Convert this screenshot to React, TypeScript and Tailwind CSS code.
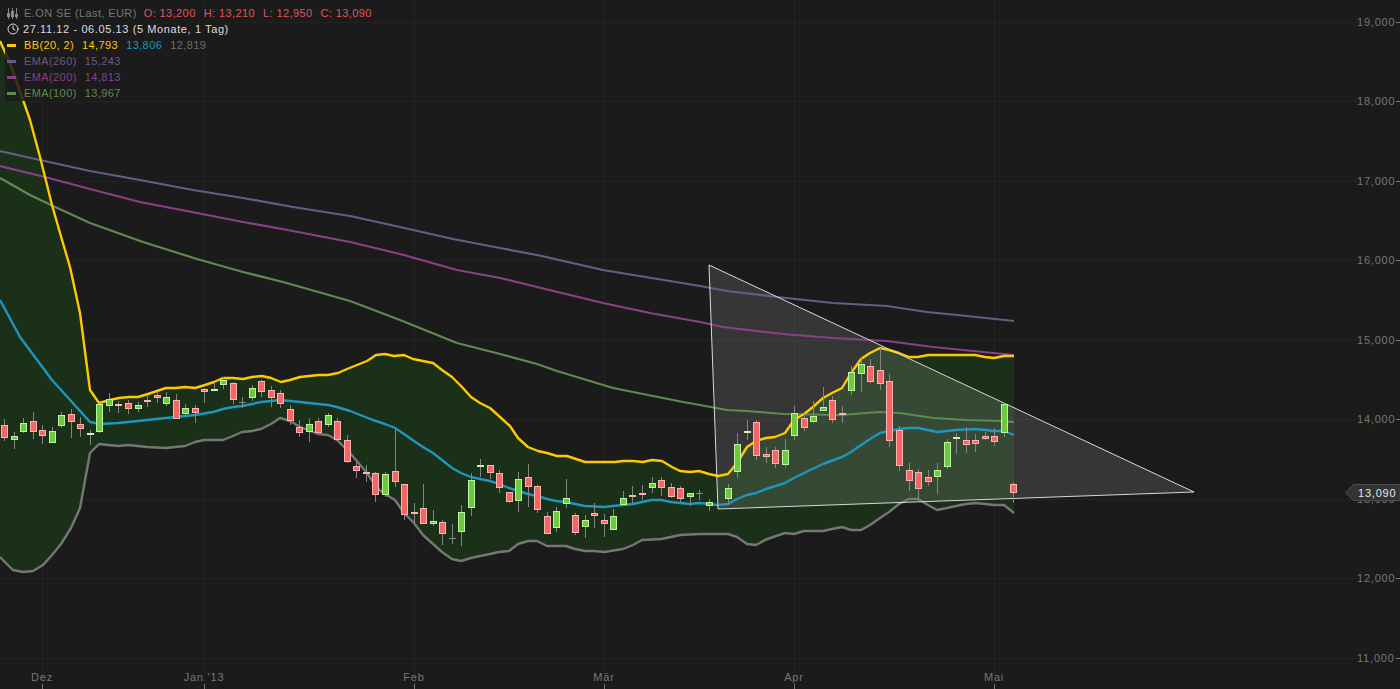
import React from 'react';
import { Clock } from 'lucide-react';

type Pt = [number, number];
type Candle = [number, number, number, number, number, 'r' | 'g' | 'n'];

const upper: Pt[] = [[0,41],[10,63],[22,97],[30,120],[40,157],[52,205],[60,233],[70,267],[80,313],[90,390],[99,403],[110,400],[119,398],[129,397],[138,397],[148,394],[157,391],[166,388],[176,388],[185,387],[195,388],[205,385],[214,382],[223,378],[233,378],[243,379],[252,377],[262,376],[271,378],[281,382],[290,380],[300,377],[309,376],[319,375],[328,375],[338,373],[347,369],[357,365],[367,361],[376,355],[385,354],[394,356],[404,355],[413,359],[423,361],[433,363],[442,370],[452,377],[462,387],[471,397],[480,403],[490,408],[500,417],[510,426],[518,438],[528,447],[538,451],[547,453],[557,456],[567,456],[576,459],[585,462],[595,462],[604,462],[615,462],[623,461],[633,461],[643,462],[652,460],[662,461],[672,467],[680,471],[690,472],[699,471],[709,474],[718,476],[728,474],[737,463],[747,447],[756,441],[766,438],[775,437],[785,433],[794,420],[804,414],[813,407],[823,398],[832,393],[842,388],[851,373],[861,359],[870,353],[880,348],[889,350],[899,353],[909,357],[918,357],[928,355],[937,355],[957,355],[975,355],[985,357],[994,358],[1004,356],[1014,356]];
const middle: Pt[] = [[0,300],[20,337],[52,380],[90,422],[100,424],[118,423],[128,422],[147,420],[166,418],[185,416],[195,415],[213,412],[223,409],[233,407],[242,406],[252,404],[261,402],[271,401],[280,400],[290,401],[300,402],[309,403],[318,404],[328,405],[337,407],[350,411],[373,420],[385,424],[395,428],[404,434],[414,441],[423,447],[433,453],[442,460],[452,468],[461,473],[471,477],[480,479],[490,481],[499,484],[509,488],[518,491],[528,494],[537,496],[547,499],[556,501],[566,502],[575,504],[585,506],[604,507],[613,506],[623,505],[633,504],[642,502],[652,500],[661,500],[671,502],[680,503],[690,504],[699,503],[709,504],[718,505],[728,504],[737,499],[747,495],[756,493],[766,489],[785,483],[794,478],[804,473],[823,464],[842,457],[851,452],[861,445],[870,439],[880,433],[889,431],[899,429],[909,428],[918,428],[928,430],[937,432],[956,430],[975,429],[985,430],[994,431],[1004,431],[1014,435]];
const lower: Pt[] = [[0,557],[13,570],[23,572],[33,571],[43,565],[52,555],[61,544],[71,528],[80,508],[90,453],[99,444],[118,446],[128,445],[147,447],[166,448],[185,446],[195,442],[204,440],[223,440],[233,436],[242,432],[252,431],[261,429],[271,424],[280,418],[290,421],[300,427],[318,434],[328,435],[337,440],[350,453],[367,473],[377,488],[385,494],[395,500],[404,513],[414,523],[423,535],[433,544],[442,552],[452,559],[461,561],[471,558],[480,556],[490,554],[499,552],[509,551],[518,544],[528,541],[537,541],[547,546],[566,546],[575,549],[585,551],[594,551],[604,552],[623,549],[633,545],[642,540],[661,539],[671,537],[680,535],[700,534],[728,534],[737,537],[747,544],[756,545],[765,540],[776,536],[785,533],[794,534],[804,531],[823,531],[832,529],[842,527],[851,530],[861,530],[870,525],[880,518],[889,512],[899,504],[909,499],[918,499],[928,505],[937,510],[947,508],[956,506],[966,504],[975,503],[985,504],[994,505],[1004,505],[1014,513]];
const ema260: Pt[] = [[0,151],[40,160],[90,171],[140,180],[193,190],[243,198],[293,207],[350,216],[400,227],[453,239],[500,248],[537,255],[603,270],[700,286],[727,291],[777,297],[833,303],[887,306],[927,312],[967,316],[1014,321]];
const ema200: Pt[] = [[0,166],[45,177],[90,189],[140,202],[197,213],[243,222],[293,231],[350,242],[400,254],[457,270],[500,278],[537,287],[603,303],[650,313],[700,322],[723,327],[783,334],[833,338],[887,341],[933,347],[983,352],[1014,355]];
const ema100: Pt[] = [[0,178],[30,195],[53,206],[90,223],[143,242],[197,259],[243,272],[283,282],[350,301],[400,320],[457,343],[500,354],[537,364],[557,371],[613,388],[683,402],[700,405],[727,410],[747,411],[783,414],[840,415],[880,412],[900,413],[933,418],[967,420],[1000,421],[1014,422]];

const candles: Candle[] = [
  [4,425,438,419,441,'r'],[14,436,440,432,449,'g'],[23,423,432,418,433,'g'],[33,421,432,412,439,'r'],[42,430,436,425,444,'r'],[52,431,443,427,443,'g'],[61,415,426,412,428,'g'],[71,414,422,409,438,'r'],[80,424,429,417,437,'r'],[90,433,435,430,445,'g'],
  [99,404,432,403,433,'g'],[109,399,406,393,412,'g'],[118,404,406,401,413,'r'],[128,403,409,400,414,'r'],[138,405,409,402,412,'g'],[147,400,401,395,407,'r'],[157,395,398,392,403,'r'],[166,397,404,392,406,'g'],[176,400,419,394,419,'r'],[185,408,414,404,416,'g'],
  [195,408,413,405,423,'r'],[204,389,392,388,403,'r'],[214,389,391,383,391,'g'],[223,380,385,377,389,'g'],[233,383,400,382,404,'r'],[242,402,403,397,408,'n'],[252,388,398,385,401,'g'],[261,381,392,380,397,'r'],[271,390,398,386,407,'r'],[280,393,404,390,408,'r'],
  [290,409,421,405,425,'r'],[299,427,433,420,437,'r'],[309,424,432,418,442,'g'],[318,421,433,418,433,'r'],[328,415,425,413,427,'g'],[337,421,440,418,442,'r'],[347,440,462,435,463,'r'],[356,466,471,462,478,'r'],[366,472,474,465,482,'r'],[375,473,495,472,502,'r'],
  [385,474,495,472,497,'g'],[395,471,482,430,487,'r'],[404,484,515,484,520,'r'],[414,512,513,503,523,'r'],[423,508,524,484,524,'r'],[433,521,524,510,526,'g'],[442,522,534,520,545,'r'],[452,538,539,524,544,'n'],[461,512,532,505,546,'g'],[471,480,508,473,516,'g'],
  [480,465,466,459,477,'g'],[490,465,473,465,479,'r'],[499,473,488,470,493,'r'],[509,492,502,492,503,'r'],[518,479,501,472,512,'g'],[528,477,487,464,507,'r'],[537,486,510,485,513,'r'],[547,516,534,512,534,'r'],[556,511,528,507,532,'g'],[566,498,504,479,508,'g'],
  [575,515,533,513,535,'r'],[585,520,527,515,538,'g'],[594,513,516,503,528,'r'],[604,520,524,514,537,'r'],[613,516,530,509,530,'g'],[623,498,505,491,505,'g'],[632,495,497,486,503,'r'],[642,493,494,485,500,'r'],[652,483,488,477,493,'g'],[661,480,488,477,496,'r'],
  [671,487,497,483,498,'r'],[680,488,499,486,502,'r'],[690,493,497,493,506,'g'],[699,493,494,490,500,'n'],[709,502,506,499,511,'g'],[728,488,499,484,505,'g'],[737,444,472,433,478,'g'],[747,431,433,420,440,'g'],[756,422,456,420,460,'r'],[766,454,457,447,463,'r'],
  [775,450,464,447,468,'r'],[785,450,465,439,467,'g'],[794,413,436,406,440,'g'],[804,418,428,413,431,'r'],[813,416,422,401,423,'g'],[823,407,411,387,411,'g'],[832,400,420,396,423,'r'],[842,413,414,406,423,'r'],[851,372,391,366,395,'g'],[861,364,374,358,392,'g'],
  [870,366,382,359,383,'r'],[880,370,384,348,390,'r'],[889,381,441,374,447,'r'],[899,430,466,426,471,'r'],[909,470,481,463,491,'r'],[918,472,489,469,502,'r'],[928,477,482,470,486,'r'],[937,470,477,463,494,'g'],[947,442,467,439,469,'g'],[956,437,438,433,454,'g'],
  [966,440,445,427,453,'r'],[975,440,444,434,452,'r'],[985,436,439,432,440,'r'],[994,436,442,428,446,'r'],[1004,404,433,403,437,'g'],[1013,484,493,482,503,'r'],
];

const priceRows: [string, number][] = [['19,000',22],['18,000',101],['17,000',181],['16,000',260],['15,000',340],['14,000',419],['13,000',499],['12,000',578],['11,000',658]];
const months: [string, number][] = [['Dez',42],["Jan '13",204],['Feb',414],['Mär',604],['Apr',794],['Mai',994]];

const toPath = (pts: Pt[]) => pts.map(p => p.join(',')).join(' ');

const bodyStyle = {
  r: { fill: '#f46565', stroke: '#ffb3b0', thin: '#ffb3b0' },
  g: { fill: '#6fc93c', stroke: '#bdf5a5', thin: '#c8f7b0' },
  n: { fill: '#8a8a8a', stroke: '#8a8a8a', thin: '#8a8a8a' },
};

const CandleMark: React.FC<{ c: Candle }> = ({ c }) => {
  const [x, top, bottom, wickTop, wickBottom, kind] = c;
  const s = bodyStyle[kind];
  return (
    <g>
      <line x1={x + 0.5} x2={x + 0.5} y1={wickTop} y2={wickBottom} stroke="#858585" strokeWidth={1} />
      {bottom - top <= 2 ? (
        <rect x={x - 3} y={top} width={7} height={kind === 'n' ? 1 : 2} fill={s.thin} />
      ) : (
        <rect x={x - 2.5} y={top + 0.5} width={6} height={bottom - top - 1} fill={s.fill} stroke={s.stroke} strokeWidth={1} />
      )}
    </g>
  );
};

const Chart: React.FC = () => (
  <svg width={1400} height={689} viewBox="0 0 1400 689" className="block">
    {priceRows.map(([, y]) => (
      <line key={y} x1={0} x2={1357} y1={y + 0.5} y2={y + 0.5} stroke="#232323" />
    ))}
    {months.map(([, x]) => (
      <g key={x}>
        <line x1={x + 0.5} x2={x + 0.5} y1={0} y2={684} stroke="#232323" />
        <line x1={x + 0.5} x2={x + 0.5} y1={684} y2={689} stroke="#777777" />
      </g>
    ))}

    <polygon points={toPath([...upper, ...[...lower].reverse()])} fill="#1a3018" />
    <polygon points="709,265 1194,492 718,509" fill="#ffffff" fillOpacity={0.12} />

    <g fill="none" strokeLinejoin="round">
      <polyline points={toPath(ema260)} stroke="#655d88" strokeWidth={2.2} />
      <polyline points={toPath(ema200)} stroke="#89408a" strokeWidth={2.2} />
      <polyline points={toPath(ema100)} stroke="#5f8a50" strokeWidth={2.2} />
      <polyline points={toPath(lower)} stroke="#767676" strokeWidth={2.4} />
      <polyline points={toPath(middle)} stroke="#1e96c0" strokeWidth={2.4} />
      <polyline points={toPath(upper)} stroke="#fdc900" strokeWidth={2.4} />
    </g>

    <polygon points="709,265 1194,492 718,509" fill="none" stroke="#d8d8d8" strokeWidth={1} />

    {candles.map(c => <CandleMark key={c[0]} c={c} />)}

    <g fontSize={11} fill="#777777" letterSpacing={0.8}>
      {priceRows.map(([label, y]) => (
        <g key={label}>
          <text x={1357} y={y + 4}>{label}</text>
          <line x1={1396} x2={1400} y1={y + 0.5} y2={y + 0.5} stroke="#777777" />
        </g>
      ))}
      {months.map(([label, x]) => (
        <text key={label} x={x} y={681} textAnchor="middle">{label}</text>
      ))}
    </g>

    <polygon points="1345.5,492.5 1353.5,484.5 1400,484.5 1400,500.5 1353.5,500.5" fill="#333333" stroke="#4d4d4d" />
    <text x={1358} y={497} fontSize={11} fill="#e8e8e8" letterSpacing={0.8}>13,090</text>
  </svg>
);

const CandleIcon: React.FC = () => (
  <svg width={11} height={11} viewBox="0 0 11 11" className="ml-0.5 mr-1.5 shrink-0" fill="none" stroke="#8a8a8a">
    <path d="M1.5 0v11M5.5 0v11M9.5 0v11" />
    <rect x={0.5} y={5.5} width={2} height={3} fill="#8a8a8a" />
    <rect x={4.5} y={3.5} width={2} height={5} fill="#8a8a8a" />
    <rect x={8.5} y={6.5} width={2} height={2} fill="#8a8a8a" />
  </svg>
);

const Swatch: React.FC<{ className: string }> = ({ className }) => (
  <span className={`ml-0.5 mr-2 h-[3px] w-[9px] shrink-0 ${className}`} />
);

const Row: React.FC<{ children: React.ReactNode }> = ({ children }) => (
  <div className="flex h-4 w-fit items-center whitespace-nowrap bg-[#1b1b1b]/85 pr-[5px]">{children}</div>
);

const Legend: React.FC = () => (
  <div className="absolute top-[5px] left-[5px] flex flex-col text-[11px] tracking-[0.4px]">
    <Row>
      <CandleIcon />
      <span className="text-[#777777]">E.ON SE (Last, EUR)</span>
      <span className="ml-[7px] flex gap-2 text-[#e25555]">
        <span>O: 13,200</span>
        <span>H: 13,210</span>
        <span>L: 12,950</span>
        <span>C: 13,090</span>
      </span>
    </Row>
    <Row>
      <Clock size={12} className="ml-0.5 mr-1 shrink-0 text-[#dddddd]" />
      <span className="tracking-[0.6px] text-[#dddddd]">27.11.12 - 06.05.13 (5 Monate, 1 Tag)</span>
    </Row>
    <Row>
      <Swatch className="bg-[#fdc900]" />
      <span className="text-[#fdc900]">BB(20, 2)</span>
      <span className="ml-2 text-[#fdc900]">14,793</span>
      <span className="ml-2 text-[#1e96c0]">13,806</span>
      <span className="ml-2 text-[#6e6e6e]">12,819</span>
    </Row>
    <Row>
      <Swatch className="bg-[#655d88]" />
      <span className="text-[#655d88]">EMA(260)</span>
      <span className="ml-2 text-[#655d88]">15,243</span>
    </Row>
    <Row>
      <Swatch className="bg-[#89408a]" />
      <span className="text-[#89408a]">EMA(200)</span>
      <span className="ml-2 text-[#89408a]">14,813</span>
    </Row>
    <Row>
      <Swatch className="bg-[#5f8a50]" />
      <span className="text-[#5f8a50]">EMA(100)</span>
      <span className="ml-2 text-[#5f8a50]">13,967</span>
    </Row>
  </div>
);

const App: React.FC = () => (
  <div className="relative h-[689px] w-[1400px] overflow-hidden bg-[#1b1b1b] [font-family:'Liberation_Sans',Arial,sans-serif]">
    <Chart />
    <Legend />
  </div>
);

export default App;
